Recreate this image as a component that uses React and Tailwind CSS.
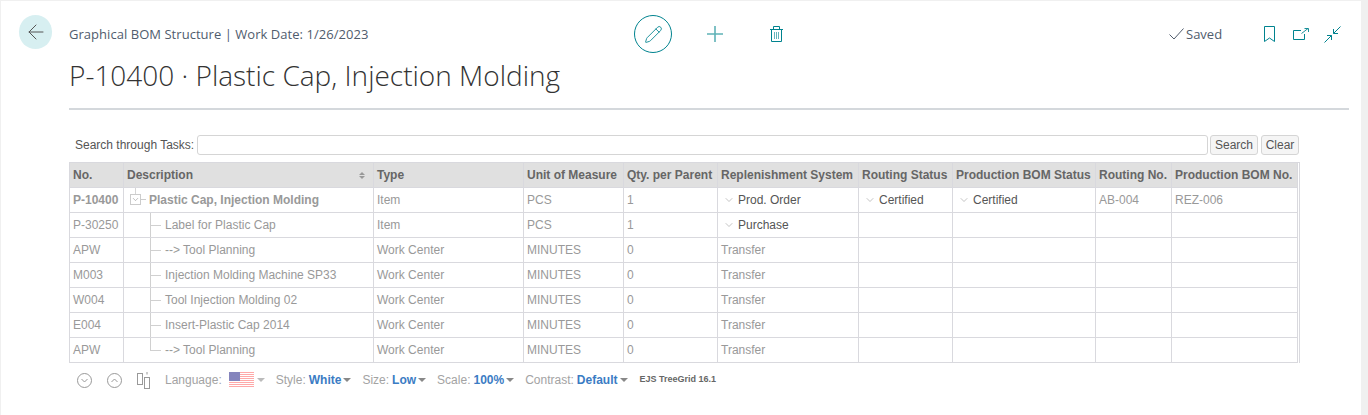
import React from 'react';
import { ArrowLeft, Pencil, ChevronDown } from 'lucide-react';

const COLS = 'grid grid-cols-[54px_250px_150px_100px_94px_141px_94px_143px_76px_126px]';

const headers = ['No.', 'Description', 'Type', 'Unit of Measure', 'Qty. per Parent', 'Replenishment System', 'Routing Status', 'Production BOM Status', 'Routing No.', 'Production BOM No.'];

const rows = [
  { no: 'P-10400', desc: 'Plastic Cap, Injection Molding', type: 'Item', uom: 'PCS', qty: '1', repl: 'Prod. Order', routing: 'Certified', bom: 'Certified', routingNo: 'AB-004', bomNo: 'REZ-006', root: true },
  { no: 'P-30250', desc: 'Label for Plastic Cap', type: 'Item', uom: 'PCS', qty: '1', repl: 'Purchase' },
  { no: 'APW', desc: '--> Tool Planning', type: 'Work Center', uom: 'MINUTES', qty: '0', plain: 'Transfer' },
  { no: 'M003', desc: 'Injection Molding Machine SP33', type: 'Work Center', uom: 'MINUTES', qty: '0', plain: 'Transfer' },
  { no: 'W004', desc: 'Tool Injection Molding 02', type: 'Work Center', uom: 'MINUTES', qty: '0', plain: 'Transfer' },
  { no: 'E004', desc: 'Insert-Plastic Cap 2014', type: 'Work Center', uom: 'MINUTES', qty: '0', plain: 'Transfer' },
  { no: 'APW', desc: '--> Tool Planning', type: 'Work Center', uom: 'MINUTES', qty: '0', plain: 'Transfer', last: true },
];

function Cell({ children, className = '' }) {
  return <div className={`flex items-center h-[25px] px-[3px] border-r border-b border-[#d9d9de] overflow-hidden whitespace-nowrap ${className}`}>{children}</div>;
}

function Enum({ children }) {
  return (
    <span className="flex items-center pl-[2px] text-[#555]">
      <ChevronDown size={12} strokeWidth={1} className="text-[#888] mr-[3px]" />
      {children}
    </span>
  );
}

function Tree({ row }) {
  if (row.root) {
    return (
      <div className="relative flex items-center h-full w-full">
        <span className="absolute left-[8px] top-0 h-[6px] w-px bg-[#d5d5d5]" />
        <span className="absolute left-[3px] top-[6px] w-[11px] h-[11px] border border-[#ccc] flex items-center justify-center bg-white">
          <ChevronDown size={9} strokeWidth={1.25} className="text-[#777]" />
        </span>
        <span className="absolute left-[14px] top-[11px] w-[5px] h-px bg-[#ccc]" />
        <span className="ml-[22px] font-bold text-[#999]">{row.desc}</span>
      </div>
    );
  }
  return (
    <div className="relative flex items-center h-full w-full">
      <span className={`absolute left-[23px] top-0 w-px bg-[#d0d0d0] ${row.last ? 'h-[12px]' : 'h-[25px]'}`} />
      <span className="absolute left-[23px] top-[12px] w-[11px] h-px bg-[#d0d0d0]" />
      <span className="ml-[38px]">{row.desc}</span>
    </div>
  );
}

function Option({ label, value }) {
  return (
    <span className="flex items-center text-[#a3a3a3]">
      {label}
      <span className="ml-[3px] font-bold text-[#3b7cc4]">{value}</span>
      <span className="ml-[2px] w-0 h-0 border-x-[4px] border-x-transparent border-t-[4px] border-t-[#888]" />
    </span>
  );
}

function Flag() {
  return (
    <svg width="25" height="16" viewBox="0 0 25 16" className="block">
      {[0, 1, 2, 3, 4, 5, 6, 7].map((i) => (
        <rect key={i} x="0" y={i * 2} width="25" height="1" fill="#ffa9a9" />
      ))}
      <rect x="0" y="0" width="11" height="9" fill="#8585bd" />
    </svg>
  );
}

function PlusIcon() {
  return (
    <svg width="16" height="16" viewBox="0 0 16 16" className="block" stroke="#5fb2b7" strokeWidth="1.6">
      <path d="M0 8h16M8 0v16" />
    </svg>
  );
}

function TrashIcon() {
  return (
    <svg width="13" height="16" viewBox="0 0 13 16" fill="none" stroke="#00838f" className="block">
      <path d="M0 3.5h13M3.5 3.5v-3h6v3M1.5 3.5v12h10v-12" />
      <path d="M4.5 6v7M6.5 6v7M8.5 6v7" strokeOpacity="0.6" />
    </svg>
  );
}

function CheckIcon() {
  return (
    <svg width="15" height="12" viewBox="0 0 15 12" fill="none" stroke="#505c6d" className="block">
      <path d="M.5 6.5L5 11L14.5.5" />
    </svg>
  );
}

function BookmarkIcon() {
  return (
    <svg width="11" height="16" viewBox="0 0 11 16" fill="none" stroke="#00838f" className="block">
      <path d="M.5.5h10v15l-5-3.5l-5 3.5z" />
    </svg>
  );
}

function ShareIcon() {
  return (
    <svg width="16" height="12" viewBox="0 0 16 12" fill="none" stroke="#00838f" className="block">
      <path d="M8 2.5H.5v9h11V6" />
      <path d="M8.5 5.5L15 .5M11.5.5H15.5V4" strokeWidth="0.9" />
    </svg>
  );
}

function CollapseIcon() {
  return (
    <svg width="17" height="17" viewBox="0 0 17 17" fill="none" stroke="#00838f" className="block">
      <path d="M16.5.5L9.5 7.5M9.5 3v4.5H14" />
      <path d="M.5 16.5L7.5 9.5M3 9.5h4.5V14" />
    </svg>
  );
}

function ColumnsIcon() {
  return (
    <svg width="15" height="17" viewBox="0 0 15 17" fill="none" stroke="#999" className="block">
      <rect x="0.5" y="1.5" width="5" height="11" />
      <rect x="7.5" y="5.5" width="5" height="11" />
      <path d="M10 0v2.5" />
    </svg>
  );
}

function RoundChevron({ up }) {
  return (
    <svg width="15" height="15" viewBox="0 0 15 15" fill="none" stroke="#999" className="block">
      <circle cx="7.5" cy="7.5" r="7" />
      <path d={up ? 'M4.5 9L7.5 6L10.5 9' : 'M4.5 6L7.5 9L10.5 6'} />
    </svg>
  );
}

export default function App() {
  return (
    <div className="h-[415px] w-[1368px] bg-[#f0f0f0] pt-px pl-px pr-[7px] overflow-hidden font-['Liberation_Sans',sans-serif]">
      <div className="h-full bg-white flex items-start pl-[18px] pt-[14px]">
        <button className="w-[33px] h-[34px] shrink-0 rounded-full bg-[#d7eff1] flex items-center justify-center text-[#555]">
          <ArrowLeft size={24} strokeWidth={1} />
        </button>
        <div className="ml-[17px] w-[1280px]">
          <div className="flex items-center h-[38px] font-['Open_Sans',sans-serif]">
            <span className="w-[565px] mt-[2px] text-[13px] tracking-[0.04px] text-[#505c6d]">Graphical BOM Structure | Work Date: 1/26/2023</span>
            <button className="w-[38px] h-[38px] rounded-full border border-[#00838f] flex items-center justify-center text-[#00838f]">
              <Pencil size={19} strokeWidth={1.1} />
            </button>
            <span className="ml-[35px]"><PlusIcon /></span>
            <span className="ml-[47px]"><TrashIcon /></span>
            <span className="ml-[386px] flex items-center text-[13px] text-[#505c6d]">
              <span className="mr-[2px]"><CheckIcon /></span>
              <span className="mt-[2px]">Saved</span>
            </span>
            <span className="ml-[42px]"><BookmarkIcon /></span>
            <span className="ml-[18px]"><ShareIcon /></span>
            <span className="ml-[15px]"><CollapseIcon /></span>
          </div>
          <h1 className="mt-[2px] h-[40px] leading-[40px] text-[28px] font-light text-[#333] font-['Open_Sans',sans-serif] whitespace-nowrap">
            P-10400 · Plastic Cap, Injection Molding
          </h1>
          <div className="mt-[13px] h-[2px] bg-[#d4d8dc]" />

          <div className="mt-[25px] flex items-center h-[20px] text-[12px] text-[#555]">
            <span className="w-[128px] pl-[6px]">Search through Tasks:</span>
            <input className="w-[1011px] h-[20px] border border-[#d5d5d5] rounded-[3px] bg-white" />
            <button className="ml-[2px] w-[48px] h-[20px] border border-[#d5d5d5] rounded-[3px] bg-[#f5f5f5]">Search</button>
            <button className="ml-[3px] w-[38px] h-[20px] border border-[#d5d5d5] rounded-[3px] bg-[#f5f5f5]">Clear</button>
          </div>

          <div className="mt-[7px] w-[1231px] border-x border-t border-[#d9d9de] text-[12px] text-[#999]">
            <div className={COLS}>
              {headers.map((h) => (
                <Cell key={h} className="bg-[#e0e0e0] font-bold text-[#666] border-[#d0d0d0]">
                  {h === 'Description' ? (
                    <span className="flex items-center justify-between w-full pr-[5px]">
                      {h}
                      <span className="flex flex-col gap-px">
                        <span className="w-0 h-0 border-x-[3px] border-x-transparent border-b-[3px] border-b-[#999]" />
                        <span className="w-0 h-0 border-x-[3px] border-x-transparent border-t-[3px] border-t-[#999]" />
                      </span>
                    </span>
                  ) : h}
                </Cell>
              ))}
            </div>
            {rows.map((r, i) => (
              <div key={i} className={COLS}>
                <Cell className={r.root ? 'font-bold' : ''}>{r.no}</Cell>
                <Cell><Tree row={r} /></Cell>
                <Cell>{r.type}</Cell>
                <Cell>{r.uom}</Cell>
                <Cell>{r.qty}</Cell>
                <Cell>{r.plain ? r.plain : <Enum>{r.repl}</Enum>}</Cell>
                <Cell>{r.routing && <Enum>{r.routing}</Enum>}</Cell>
                <Cell>{r.bom && <Enum>{r.bom}</Enum>}</Cell>
                <Cell>{r.routingNo}</Cell>
                <Cell>{r.bomNo}</Cell>
              </div>
            ))}
          </div>

          <div className="mt-[9px] flex items-center h-[16px] pl-[8px] text-[12px]">
            <RoundChevron />
            <span className="ml-[15px]"><RoundChevron up /></span>
            <span className="ml-[15px]"><ColumnsIcon /></span>
            <span className="ml-[13px] text-[#a3a3a3]">Language:</span>
            <span className="ml-[7px]"><Flag /></span>
            <span className="ml-[3px] w-0 h-0 border-x-[4px] border-x-transparent border-t-[4px] border-t-[#bbb]" />
            <span className="ml-[11px]"><Option label="Style:" value="White" /></span>
            <span className="ml-[11px]"><Option label="Size:" value="Low" /></span>
            <span className="ml-[11px]"><Option label="Scale:" value="100%" /></span>
            <span className="ml-[11px]"><Option label="Contrast:" value="Default" /></span>
            <span className="ml-[12px] text-[9px] font-bold text-[#666]">EJS TreeGrid 16.1</span>
          </div>
        </div>
      </div>
    </div>
  );
}
